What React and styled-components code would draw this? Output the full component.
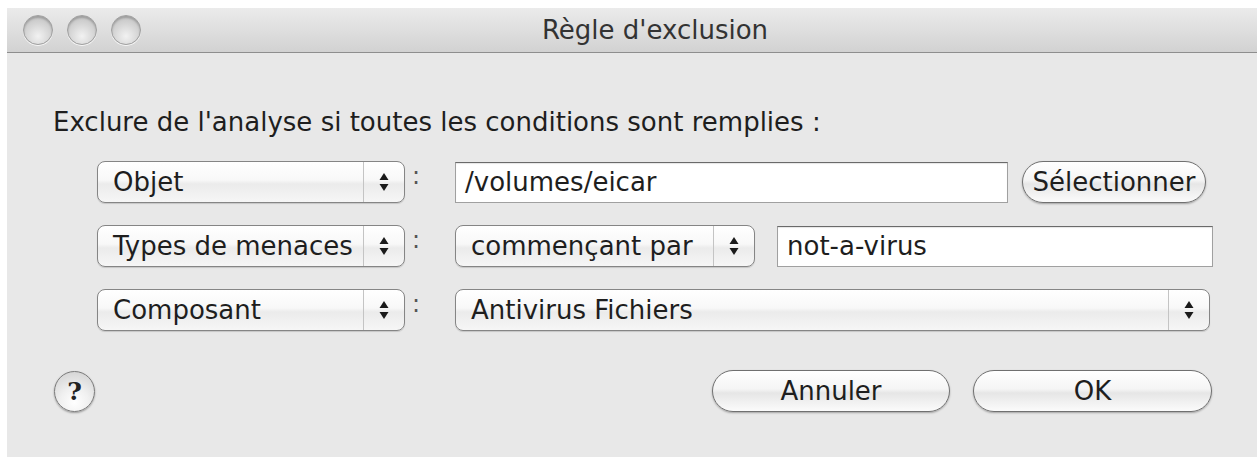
import React from 'react';
import styled, { createGlobalStyle } from 'styled-components';

const GlobalStyle = createGlobalStyle`
  html, body {
    margin: 0;
    padding: 0;
    background: #ffffff;
  }
  body {
    font-family: "DejaVu Sans", "Liberation Sans", sans-serif;
    color: #1e1e1e;
  }
`;

const Window = styled.div`
  margin: 8px 0 0 7px;
  width: 1250px;
  height: 449px;
  background: #e8e8e8;
  display: flex;
  flex-direction: column;
`;

const TitleBar = styled.div`
  position: relative;
  height: 44px;
  flex: none;
  display: flex;
  align-items: center;
  justify-content: center;
  padding-left: 46px;
  background: linear-gradient(#ebebeb, #dcdcdc 60%, #d2d2d2);
  border-bottom: 1px solid #8e8e8e;
  font-size: 26px;
  color: #333;
`;

const Lights = styled.div`
  position: absolute;
  left: 16px;
  top: 7px;
  display: flex;
  gap: 14px;
`;

const Light = styled.span`
  width: 28px;
  height: 28px;
  border-radius: 50%;
  border: 1px solid #a0a0a0;
  background: radial-gradient(circle at 50% 72%, #f2f2f2 0%, #d8d8d8 45%, #b9b9b9 100%);
  box-shadow: inset 0 2px 2px rgba(0, 0, 0, 0.2), 0 1px 0 rgba(255, 255, 255, 0.8);
`;

const Body = styled.div`
  flex: 1;
  padding: 54px 44px 0 46px;
  display: flex;
  flex-direction: column;
`;

const Intro = styled.div`
  font-size: 26px;
  line-height: 30px;
  margin-bottom: 24px;
  white-space: nowrap;
`;

const Rules = styled.div`
  display: grid;
  grid-template-columns: 308px 50px 758px;
  grid-auto-rows: 42px;
  row-gap: 22px;
  padding-left: 44px;
  align-items: center;
`;

const Colon = styled.span`
  font-size: 24px;
  color: #555;
  padding-left: 7px;
  align-self: start;
  line-height: 30px;
`;

const Line = styled.div`
  display: flex;
  align-items: center;
  gap: ${p => p.$gap || 0}px;
`;

const Popup = styled.div`
  box-sizing: border-box;
  width: ${p => p.$w ? `${p.$w}px` : 'auto'};
  flex: ${p => p.$w ? 'none' : '1'};
  height: 42px;
  border: 1px solid #858585;
  border-radius: 8px;
  background: linear-gradient(#ffffff, #f8f8f8 45%, #ebebeb 55%, #f6f6f6);
  box-shadow: 0 1px 1px rgba(0, 0, 0, 0.15);
  display: flex;
  align-items: stretch;
  font-size: 26px;
`;

const PopupLabel = styled.span`
  flex: 1;
  display: flex;
  align-items: center;
  padding-left: 15px;
  white-space: nowrap;
  overflow: hidden;
`;

const PopupArrows = styled.span`
  width: 40px;
  flex: none;
  border-left: 1px solid #c4c4c4;
  display: flex;
  align-items: center;
  justify-content: center;
`;

const Field = styled.div`
  box-sizing: border-box;
  width: ${p => p.$w ? `${p.$w}px` : 'auto'};
  flex: ${p => p.$w ? 'none' : '1'};
  height: 41px;
  background: #ffffff;
  border: 1px solid #a0a0a0;
  border-top-color: #6a6a6a;
  box-shadow: inset 0 1px 1px rgba(0, 0, 0, 0.1);
  display: flex;
  align-items: center;
  padding-left: 9px;
  font-size: 26px;
`;

const PillButton = styled.button`
  box-sizing: border-box;
  width: ${p => p.$w}px;
  height: 42px;
  flex: none;
  border: 1px solid #707070;
  border-radius: 21px;
  background: linear-gradient(#ffffff, #f5f5f5 45%, #e6e6e6 55%, #fbfbfb);
  box-shadow: 0 1px 2px rgba(0, 0, 0, 0.3);
  font-family: inherit;
  font-size: 26px;
  color: #1e1e1e;
  padding: 0;
  white-space: nowrap;
  overflow: hidden;
`;

const Footer = styled.div`
  display: flex;
  align-items: center;
  margin-top: 39px;
  padding-left: 1px;
`;

const HelpButton = styled.button`
  width: 41px;
  height: 41px;
  border-radius: 50%;
  border: 1px solid #7a7a7a;
  background: radial-gradient(circle at 50% 78%, #ffffff 0%, #f0f0f0 40%, #cdcdcd 100%);
  box-shadow: 0 1px 2px rgba(0, 0, 0, 0.35);
  font-family: "DejaVu Serif", serif;
  font-size: 25px;
  font-weight: bold;
  color: #222;
  padding: 0;
`;

const Actions = styled.div`
  margin-left: auto;
  margin-right: 1px;
  display: flex;
  gap: 23px;
`;

const Arrows = () => (
  <svg width="12" height="22" viewBox="0 0 12 22">
    <path d="M6 2 L10.5 9 L1.5 9 Z" fill="#1a1a1a" />
    <path d="M6 20 L10.5 13 L1.5 13 Z" fill="#1a1a1a" />
  </svg>
);

const Select = ({ label, w }) => (
  <Popup $w={w}>
    <PopupLabel>{label}</PopupLabel>
    <PopupArrows><Arrows /></PopupArrows>
  </Popup>
);

const App = () => (
  <>
    <GlobalStyle />
    <Window>
      <TitleBar>
        <Lights>
          <Light />
          <Light />
          <Light />
        </Lights>
        Règle d'exclusion
      </TitleBar>
      <Body>
        <Intro>Exclure de l'analyse si toutes les conditions sont remplies :</Intro>
        <Rules>
          <Select label="Objet" />
          <Colon>:</Colon>
          <Line $gap={14}>
            <Field $w={553}>/volumes/eicar</Field>
            <PillButton $w={184}>Sélectionner</PillButton>
          </Line>

          <Select label="Types de menaces" />
          <Colon>:</Colon>
          <Line $gap={22}>
            <Select label="commençant par" w={300} />
            <Field $w={436}>not-a-virus</Field>
          </Line>

          <Select label="Composant" />
          <Colon>:</Colon>
          <Line>
            <Select label="Antivirus Fichiers" w={755} />
          </Line>
        </Rules>
        <Footer>
          <HelpButton>?</HelpButton>
          <Actions>
            <PillButton $w={238}>Annuler</PillButton>
            <PillButton $w={239}>OK</PillButton>
          </Actions>
        </Footer>
      </Body>
    </Window>
  </>
);

export default App;
